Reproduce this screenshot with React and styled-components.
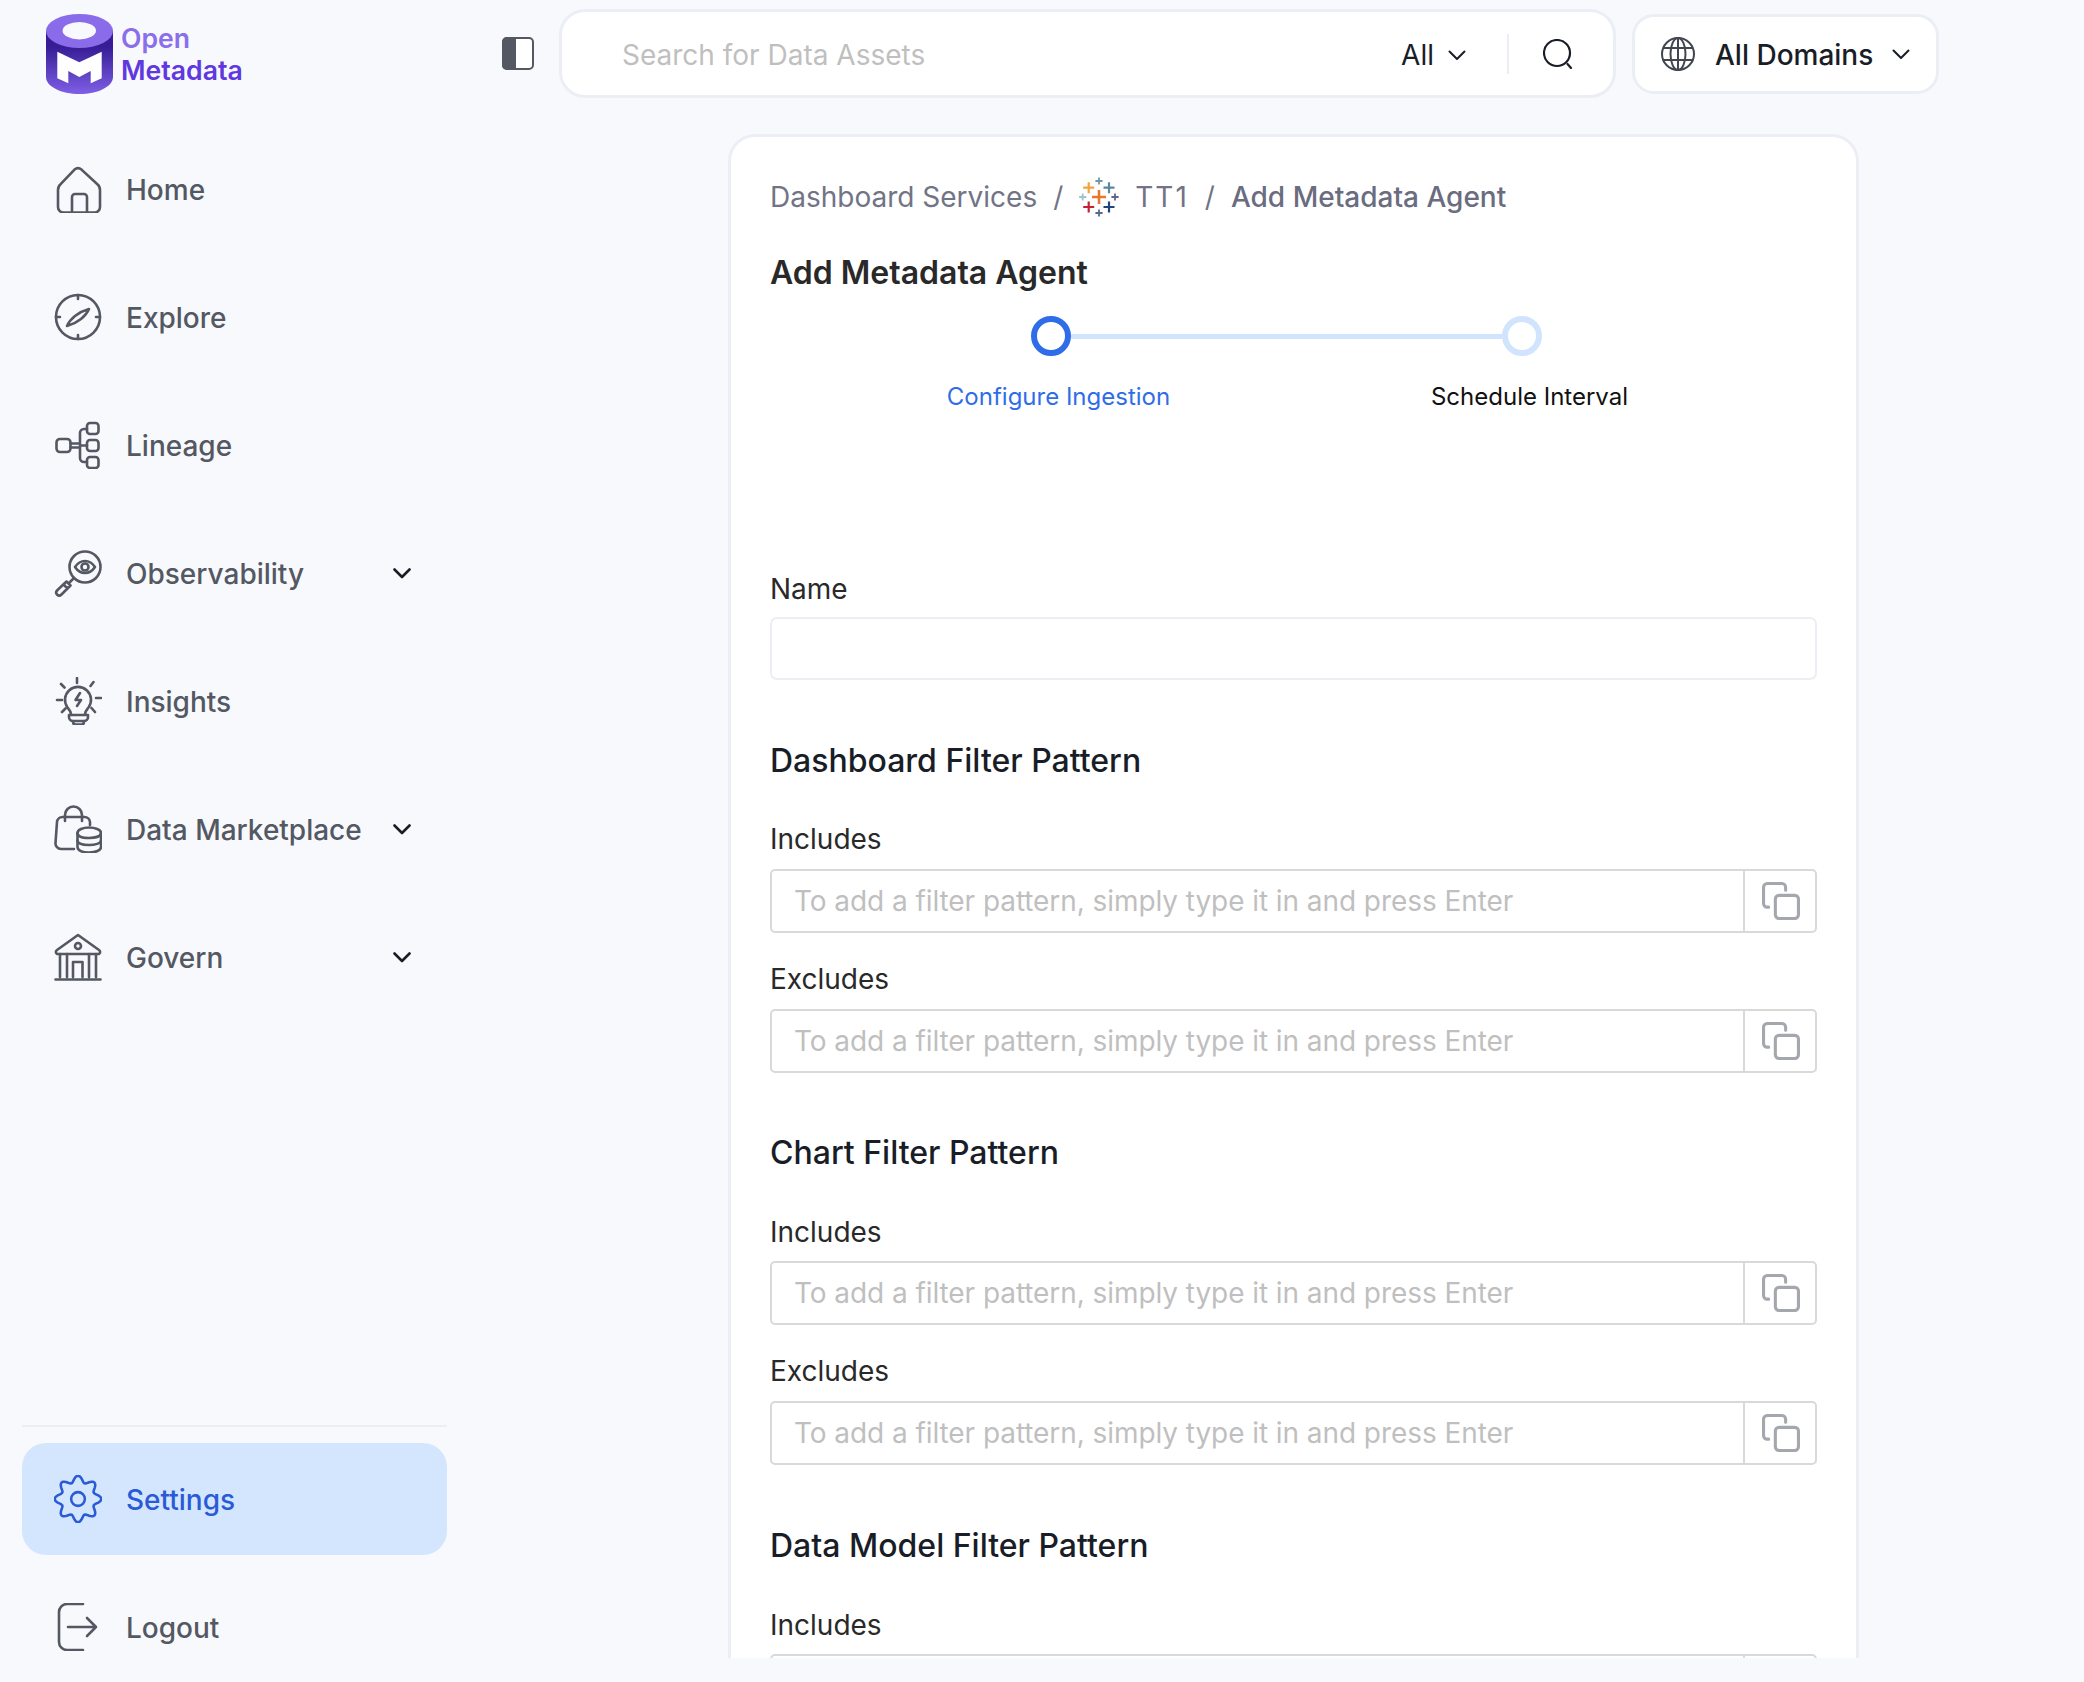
import styled, { createGlobalStyle } from 'styled-components';

const GlobalStyle = createGlobalStyle`
  html, body {
    margin: 0;
    padding: 0;
    background: #f8f9fd;
    font-family: Inter, "Liberation Sans", sans-serif;
  }
  * {
    box-sizing: border-box;
  }
`;

const Shell = styled.div`
  display: flex;
  width: 2084px;
  height: 1682px;
  overflow: hidden;
  background: #f8f9fd;
`;

const Sidebar = styled.aside`
  width: 447px;
  flex-shrink: 0;
  height: 1683px;
  padding-left: 22px;
  display: flex;
  flex-direction: column;
`;

const LogoRow = styled.div`
  display: flex;
  align-items: center;
  gap: 8px;
  height: 80px;
  margin-top: 14px;
  margin-left: 24px;
`;

const LogoText = styled.div`
  font-size: 26.6px;
  font-weight: 600;
  line-height: 32px;
  color: #6038e0;
  span {
    display: block;
    color: #8b6ee9;
  }
`;

const Nav = styled.nav`
  display: flex;
  flex-direction: column;
  gap: 16px;
  margin-top: 39px;
  flex: 1;
`;

const NavItem = styled.div`
  display: flex;
  align-items: center;
  height: 112px;
  flex-shrink: 0;
  padding: 0 36px 0 32px;
  border-radius: 24px;
  font-size: 28px;
  font-weight: 450;
  color: ${(p) => (p.$active ? '#2a5bd7' : '#535862')};
  background: ${(p) => (p.$active ? '#d4e6fe' : 'transparent')};
  svg.nav-icon {
    width: 48px;
    height: 48px;
    margin-right: 24px;
    flex-shrink: 0;
    fill: none;
    stroke: currentColor;
    stroke-width: 2.6;
    stroke-linecap: round;
    stroke-linejoin: round;
  }
`;

const NavLabel = styled.span`
  flex: 1;
  padding-top: 2px;
`;

const BottomNav = styled.div`
  display: flex;
  flex-direction: column;
  gap: 16px;
  border-top: 2px solid #eceef4;
  padding-top: 16px;
`;

const Main = styled.main`
  flex: 1;
  height: 1658px;
  overflow: hidden;
  display: flex;
  flex-direction: column;
`;

const TopBar = styled.header`
  display: flex;
  align-items: center;
  height: 89px;
  margin-top: 9px;
  padding-left: 55px;
`;

const ToggleButton = styled.svg`
  width: 32px;
  height: 33px;
  flex-shrink: 0;
  margin-right: 25px;
`;

const SearchBox = styled.div`
  width: 1057px;
  height: 89px;
  display: flex;
  align-items: center;
  background: #fff;
  border: 3px solid #eceef6;
  border-radius: 26px;
  padding: 0 40px 0 60px;
  font-size: 28px;
`;

const SearchPlaceholder = styled.span`
  flex: 1;
  padding-top: 2px;
  color: #bfbfbf;
`;

const SearchFilter = styled.span`
  display: flex;
  align-items: center;
  gap: 14px;
  color: #181d27;
  padding: 2px 41px 0 0;
  height: 40px;
  border-right: 2px solid #eceef6;
  margin-right: 34px;
`;

const DomainBox = styled.div`
  width: 307px;
  height: 80px;
  margin-left: 16px;
  display: flex;
  align-items: center;
  background: #fff;
  border: 3px solid #eceef6;
  border-radius: 22px;
  padding-left: 26px;
  font-size: 28px;
  font-weight: 500;
  color: #181d27;
`;

const DomainLabel = styled.span`
  margin: 0 19px 0 20px;
  padding-top: 2px;
`;

const Card = styled.section`
  width: 1131px;
  margin: 36px 0 0 281px;
  flex: 1;
  background: #fff;
  border: 3px solid #eceef6;
  border-bottom: none;
  border-radius: 27px 27px 0 0;
  padding: 40px 39px 0 39px;
  overflow: hidden;
`;

const Breadcrumb = styled.div`
  display: flex;
  align-items: center;
  height: 40px;
  font-size: 28px;
  line-height: 40px;
  color: #717486;
`;

const Crumb = styled.span`
  font-weight: ${(p) => (p.$strong ? 450 : 400)};
  letter-spacing: ${(p) => (p.$spaced ? '2px' : 'normal')};
  color: ${(p) => (p.$strong ? '#6a6c80' : '#717486')};
`;

const Slash = styled.span`
  margin: 0 16px;
`;

const TableauIcon = styled.svg`
  width: 40px;
  height: 40px;
  margin: 0 16px 0 0;
`;

const Title = styled.h1`
  margin: 34px 0 0;
  font-size: 32px;
  line-height: 44px;
  font-weight: 600;
  color: #292929;
`;

const StepTrack = styled.div`
  display: flex;
  align-items: center;
  margin: 21px 0 0 261px;
`;

const StepDot = styled.span`
  width: 40px;
  height: 40px;
  border-radius: 50%;
  background: #fff;
  border: 6px solid ${(p) => (p.$active ? '#2f6de8' : '#d1e4fd')};
`;

const StepLine = styled.span`
  width: 431px;
  height: 5px;
  background: #d1e4fd;
`;

const StepLabels = styled.div`
  display: flex;
  margin: 25px 0 0 53px;
`;

const StepLabel = styled.span`
  width: 471px;
  text-align: center;
  font-size: 24px;
  line-height: 32px;
  color: ${(p) => (p.$active ? '#2f6de8' : '#111')};
`;

const FieldLabel = styled.label`
  display: block;
  margin-top: ${(p) => p.$top}px;
  font-size: 28px;
  line-height: 32px;
  color: #292929;
`;

const NameInput = styled.div`
  height: 63px;
  margin-top: 12px;
  background: #fff;
  border: 2.5px solid #eceef4;
  border-radius: 7px;
`;

const SectionHeading = styled.h2`
  margin: ${(p) => p.$top}px 0 0;
  font-size: 32px;
  line-height: 44px;
  font-weight: 500;
  color: #181d27;
`;

const PatternInput = styled.div`
  display: flex;
  height: 64px;
  margin-top: ${(p) => p.$gap}px;
  border: 2.5px solid #d9d9d9;
  border-radius: 5px;
  flex-shrink: 0;
`;

const PatternText = styled.span`
  flex: 1;
  padding-left: 22px;
  font-size: 28px;
  line-height: 60px;
  letter-spacing: -0.07px;
  color: #bfbfbf;
`;

const CopyAddon = styled.span`
  width: 72px;
  padding-left: 2px;
  border-left: 2px solid #d9d9d9;
  display: flex;
  align-items: center;
  justify-content: center;
  svg {
    width: 38px;
    height: 38px;
    fill: none;
    stroke: #a4a7ae;
    stroke-width: 3;
    stroke-linecap: round;
  }
`;

const Chevron = ({ size = 18, color = '#181d27', width = 2 }) => (
  <svg width={size} height={size} viewBox="0 0 18 18" fill="none" stroke={color} strokeWidth={width} strokeLinecap="round" strokeLinejoin="round">
    <path d="M1.5 5.5 9 13l7.5-7.5" />
  </svg>
);

const HomeIcon = () => (
  <svg className="nav-icon" viewBox="0 0 48 48">
    <path d="M4 25c0-2.5.9-4.4 2.6-5.8L20.5 4.6c2.4-2 4.6-2 7 0l15.9 14.6c1.7 1.400 2.600 3.300 2.600 5.800v17a5.500 5.500 0 0 1-5.500 5.500H9.500A5.500 5.500 0 0 1 4 42z" />
    <path d="M18 47V32a3 3 0 0 1 3-3h9a3 3 0 0 1 3 3v15" />
  </svg>
);

const ExploreIcon = () => (
  <svg className="nav-icon" viewBox="0 0 48 48">
    <circle cx="24" cy="24" r="22" />
    <path d="M24 2v4M24 42v4M2 24h4M42 24h4" />
    <path d="M13 33c3-7 11-14 22-17-3 7-11 14-22 17z" />
  </svg>
);

const LineageIcon = () => (
  <svg className="nav-icon" viewBox="0 0 48 48">
    <rect x="2.500" y="18" width="14" height="13" rx="3.500" />
    <rect x="33" y="2" width="11.500" height="11" rx="3" />
    <rect x="33" y="19" width="11.500" height="11" rx="3" />
    <rect x="33" y="36" width="11.500" height="11" rx="3" />
    <path d="M16.500 22.500h9.500M16.500 26.500h9.500M26 24.500h7M33 8h-3a4 4 0 0 0-4 4v25a4 4 0 0 0 4 4h3" />
  </svg>
);

const ObservabilityIcon = () => (
  <svg className="nav-icon" viewBox="0 0 48 48">
    <circle cx="31" cy="18" r="15.500" />
    <path d="M21 18c3-4.500 6.500-6 10-6s7 1.500 10 6c-3 4.500-6.500 6-10 6s-7-1.500-10-6z" />
    <circle cx="31" cy="18" r="3.500" />
    <path d="M20 29l-5 5" />
    <path d="M12.500 32.500l4 4-9 9c-1.500 1.500-3 1.500-4.500 0s-1-3 .5-4.500zM10 36l3 3" />
  </svg>
);

const InsightsIcon = () => (
  <svg className="nav-icon" viewBox="0 0 48 48">
    <path d="M17 37c-.5-3-1.500-4-3.500-6.500a13 13 0 1 1 21 0c-2 2.500-3 3.500-3.500 6.500" />
    <path d="M15 38h19v2a4 4 0 0 1-4 4H19a4 4 0 0 1-4-4zM19 44.500c0 2 1 3 2.500 3h6c1.500 0 2.500-1 2.500-3" />
    <path d="M26 16l-4.500 7h5.500L23 29" />
    <path d="M23 1v5M3 23h5M42 21h5M7 7l3.500 3.500M39.500 5l-3 4M8 35l3.500-3.500M41 35l-3.500-4" />
  </svg>
);

const MarketIcon = () => (
  <svg className="nav-icon" viewBox="0 0 48 48">
    <path d="M20 44H7a5.500 5.500 0 0 1-5.500-6L3 17a5.500 5.500 0 0 1 5.500-5h22a5.500 5.500 0 0 1 5.500 5v3" />
    <path d="M11 16v-6a8.500 8.500 0 0 1 17 0v6" />
    <path d="M23.500 28c0-3.500 5.500-5.500 11.500-5.500S47 24.500 47 28v14c0 3.500-5.500 5.500-12 5.500S23.500 45.500 23.500 42z" />
    <path d="M23.500 28c0 3.500 5.500 5 11.500 5s12-1.500 12-5M23.500 35.500c0 3 5.500 4.500 11.500 4.500s12-1.500 12-4.500" />
  </svg>
);

const GovernIcon = () => (
  <svg className="nav-icon" viewBox="0 0 48 48">
    <path d="M3 21c-1.500-1-1.500-3 0-4L24 2l21 15c1.500 1 1.500 3 0 4z" />
    <circle cx="24" cy="13" r="3" />
    <path d="M6 21v23M13 21v23M35 21v23M42 21v23M19 44V29h9.500v15M1.500 46.500h45" />
  </svg>
);

const cogPath = () => {
  const pts = [];
  for (let i = 0; i < 160; i += 1) {
    const t = (i / 160) * Math.PI * 2;
    const r = 20.5 + 3.2 * Math.cos(8 * t);
    pts.push(`${(24.5 + r * Math.sin(t)).toFixed(2)} ${(24.5 - r * Math.cos(t)).toFixed(2)}`);
  }
  return `M${pts.join('L')}Z`;
};

const SettingsIcon = () => (
  <svg className="nav-icon" viewBox="0 0 49 49">
    <path d={cogPath()} />
    <circle cx="24.500" cy="24.500" r="7" />
  </svg>
);

const LogoutIcon = () => (
  <svg className="nav-icon" viewBox="0 0 48 48">
    <path d="M29 1H13a8 8 0 0 0-8 8v30a8 8 0 0 0 8 8h16" />
    <path d="M14 24h28M33 15l9 9-9 9" />
  </svg>
);

const LogoMark = () => (
  <svg width="67" height="80" viewBox="0 0 67 80">
    <defs>
      <linearGradient id="logoBody" x1="0" y1="0" x2="0" y2="1">
        <stop offset="0.25" stopColor="#361d96" />
        <stop offset="1" stopColor="#7f5fe6" />
      </linearGradient>
    </defs>
    <path d="M0 17h67v46c0 9.500-15 17-33.500 17S0 72.500 0 63z" fill="url(#logoBody)" />
    <ellipse cx="33.500" cy="17" rx="33.500" ry="17" fill="#8a6be9" />
    <ellipse cx="33.300" cy="16.700" rx="16.700" ry="8.700" fill="#f8f9fd" />
    <polygon points="11.300,37.700 33.300,48.300 55.700,37.700 55.700,64.300 44.700,69.300 44.700,57 33.300,63 22.300,57 22.300,69.300 11.300,64.300" fill="#fff" />
  </svg>
);

const tableauCrosses = [
  { x: 20, y: 20, a: 7, c: '#e8762b', w: 2.6 },
  { x: 9.700, y: 10.700, a: 5.500, c: '#f2a33c', w: 2.2 },
  { x: 30, y: 10.700, a: 5.500, c: '#59879b', w: 2.2 },
  { x: 9.700, y: 30, a: 5.500, c: '#c72035', w: 2.2 },
  { x: 30, y: 30, a: 5.500, c: '#1f447e', w: 2.2 },
  { x: 20, y: 4, a: 3.600, c: '#7099a6', w: 1.8 },
  { x: 3.700, y: 20, a: 3.600, c: '#9cc3d0', w: 1.8 },
  { x: 36, y: 20, a: 3.600, c: '#5b6591', w: 1.8 },
  { x: 20, y: 36, a: 3.600, c: '#5b6591', w: 1.8 },
];

const TableauLogo = () => (
  <TableauIcon viewBox="0 0 40 40">
    {tableauCrosses.map((p) => (
      <path
        key={`${p.x}-${p.y}`}
        d={`M${p.x - p.a} ${p.y}h${p.a * 2}M${p.x} ${p.y - p.a}v${p.a * 2}`}
        stroke={p.c}
        strokeWidth={p.w}
        fill="none"
      />
    ))}
  </TableauIcon>
);

const CopyIcon = () => (
  <svg viewBox="0 0 37 37">
    <rect x="13" y="13" width="22.500" height="22.500" rx="3.500" />
    <path d="M6.500 24.500H5a3.500 3.500 0 0 1-3.500-3.500V5A3.500 3.500 0 0 1 5 1.500h14.500A3.500 3.500 0 0 1 23 5v3" />
  </svg>
);

const PatternField = ({ label, top, gap = 14 }) => (
  <>
    <FieldLabel $top={top}>{label}</FieldLabel>
    <PatternInput $gap={gap}>
      <PatternText>To add a filter pattern, simply type it in and press Enter</PatternText>
      <CopyAddon>
        <CopyIcon />
      </CopyAddon>
    </PatternInput>
  </>
);

const mainNav = [
  { label: 'Home', icon: HomeIcon },
  { label: 'Explore', icon: ExploreIcon },
  { label: 'Lineage', icon: LineageIcon },
  { label: 'Observability', icon: ObservabilityIcon, more: true },
  { label: 'Insights', icon: InsightsIcon },
  { label: 'Data Marketplace', icon: MarketIcon, more: true },
  { label: 'Govern', icon: GovernIcon, more: true },
];

export default function App() {
  return (
    <>
      <GlobalStyle />
      <Shell>
        <Sidebar>
          <LogoRow>
            <LogoMark />
            <LogoText>
              <span>Open</span>
              Metadata
            </LogoText>
          </LogoRow>
          <Nav>
            {mainNav.map((item) => (
              <NavItem key={item.label}>
                <item.icon />
                <NavLabel>{item.label}</NavLabel>
                {item.more && <Chevron width={2.6} />}
              </NavItem>
            ))}
          </Nav>
          <BottomNav>
            <NavItem $active>
              <SettingsIcon />
              <NavLabel>Settings</NavLabel>
            </NavItem>
            <NavItem>
              <LogoutIcon />
              <NavLabel>Logout</NavLabel>
            </NavItem>
          </BottomNav>
        </Sidebar>
        <Main>
          <TopBar>
            <ToggleButton viewBox="0 0 32 33">
              <rect x="1" y="1" width="30" height="31" rx="4" fill="#fff" stroke="#535862" strokeWidth="2" />
              <path d="M5 0h9v33H5a5 5 0 0 1-5-5V5a5 5 0 0 1 5-5z" fill="#535862" />
            </ToggleButton>
            <SearchBox>
              <SearchPlaceholder>Search for Data Assets</SearchPlaceholder>
              <SearchFilter>
                All
                <Chevron />
              </SearchFilter>
              <svg width="30" height="30" viewBox="0 0 30 30" fill="none" stroke="#181d27" strokeWidth="2.200" strokeLinecap="round">
                <circle cx="14" cy="14" r="13" />
                <path d="M24.500 25 28 29" />
              </svg>
            </SearchBox>
            <DomainBox>
              <svg width="34" height="34" viewBox="0 0 34 34" fill="none" stroke="#414651" strokeWidth="2">
                <circle cx="17" cy="17" r="16" />
                <ellipse cx="17" cy="17" rx="7.500" ry="16" />
                <path d="M17 1v32M3 11h28M3 23h28" />
              </svg>
              <DomainLabel>All Domains</DomainLabel>
              <Chevron />
            </DomainBox>
          </TopBar>
          <Card>
            <Breadcrumb>
              <Crumb>Dashboard Services</Crumb>
              <Slash>/</Slash>
              <TableauLogo />
              <Crumb $spaced>TT1</Crumb>
              <Slash>/</Slash>
              <Crumb $strong>Add Metadata Agent</Crumb>
            </Breadcrumb>
            <Title>Add Metadata Agent</Title>
            <StepTrack>
              <StepDot $active />
              <StepLine />
              <StepDot />
            </StepTrack>
            <StepLabels>
              <StepLabel $active>Configure Ingestion</StepLabel>
              <StepLabel>Schedule Interval</StepLabel>
            </StepLabels>
            <FieldLabel $top={160}>Name</FieldLabel>
            <NameInput />
            <SectionHeading $top={59}>Dashboard Filter Pattern</SectionHeading>
            <PatternField label="Includes" top={40} />
            <PatternField label="Excludes" top={30} />
            <SectionHeading $top={58}>Chart Filter Pattern</SectionHeading>
            <PatternField label="Includes" top={41} gap={13} />
            <PatternField label="Excludes" top={30} />
            <SectionHeading $top={59}>Data Model Filter Pattern</SectionHeading>
            <FieldLabel $top={41}>Includes</FieldLabel>
            <PatternInput $gap={13}>
              <PatternText />
              <CopyAddon />
            </PatternInput>
          </Card>
        </Main>
      </Shell>
    </>
  );
}
